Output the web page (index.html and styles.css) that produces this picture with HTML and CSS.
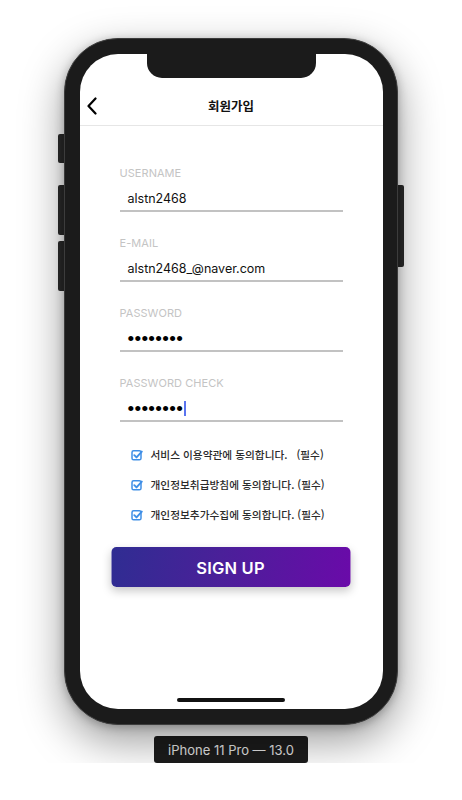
FILE: index.html
```html
<!DOCTYPE html>
<html lang="ko">
<head>
<meta charset="utf-8">
<title>회원가입</title>
<link rel="stylesheet" href="styles.css">
</head>
<body>
<div class="stage">
  <div class="device">
    <span class="hw hw-silent"></span>
    <span class="hw hw-vol-up"></span>
    <span class="hw hw-vol-down"></span>
    <span class="hw hw-power"></span>
    <div class="phone">
      <div class="screen">
        <div class="notch"></div>
        <header class="nav">
          <span class="back">
            <svg width="11" height="18" viewBox="0 0 11 18"><path d="M9.5 1.5 L2.5 9 L9.5 16.5" fill="none" stroke="#000" stroke-width="2.2" stroke-linecap="round" stroke-linejoin="round"/></svg>
          </span>
          <h1 class="title">회원가입</h1>
          <span class="nav-spacer"></span>
        </header>
        <form class="form">
          <div class="field">
            <div class="label">USERNAME</div>
            <div class="value">alstn2468</div>
          </div>
          <div class="field">
            <div class="label">E-MAIL</div>
            <div class="value">alstn2468_@naver.com</div>
          </div>
          <div class="field">
            <div class="label">PASSWORD</div>
            <div class="value"><span class="dots">••••••••</span></div>
          </div>
          <div class="field field-last">
            <div class="label">PASSWORD CHECK</div>
            <div class="value"><span class="dots">••••••••</span><span class="caret"></span></div>
          </div>
          <ul class="agree">
            <li class="agree-row">
              <svg class="check" width="12" height="12" viewBox="0 0 12 12"><rect x="1" y="1.8" width="9" height="9" rx="1.6" fill="none" stroke="#3f8fe6" stroke-width="1.5"/><path d="M3.3 6.2 L5.5 8.4 L10.8 2.6" fill="none" stroke="#3f8fe6" stroke-width="1.9" stroke-linecap="round" stroke-linejoin="round"/></svg>
              <span class="agree-text">서비스 이용약관에 동의합니다. &nbsp;&nbsp;(필수)</span>
            </li>
            <li class="agree-row">
              <svg class="check" width="12" height="12" viewBox="0 0 12 12"><rect x="1" y="1.8" width="9" height="9" rx="1.6" fill="none" stroke="#3f8fe6" stroke-width="1.5"/><path d="M3.3 6.2 L5.5 8.4 L10.8 2.6" fill="none" stroke="#3f8fe6" stroke-width="1.9" stroke-linecap="round" stroke-linejoin="round"/></svg>
              <span class="agree-text">개인정보취급방침에 동의합니다. (필수)</span>
            </li>
            <li class="agree-row">
              <svg class="check" width="12" height="12" viewBox="0 0 12 12"><rect x="1" y="1.8" width="9" height="9" rx="1.6" fill="none" stroke="#3f8fe6" stroke-width="1.5"/><path d="M3.3 6.2 L5.5 8.4 L10.8 2.6" fill="none" stroke="#3f8fe6" stroke-width="1.9" stroke-linecap="round" stroke-linejoin="round"/></svg>
              <span class="agree-text">개인정보추가수집에 동의합니다. (필수)</span>
            </li>
          </ul>
          <button type="button" class="signup">SIGN UP</button>
        </form>
        <div class="home-bar"></div>
      </div>
    </div>
  </div>
  <div class="device-name">iPhone 11 Pro — 13.0</div>
</div>
</body>
</html>
```

FILE: styles.css
```css
* { box-sizing: border-box; }

html, body {
  margin: 0;
  padding: 0;
  background: #ffffff;
}

body {
  font-family: Inter, "Noto Sans CJK KR", sans-serif;
  color: #111;
}

.stage {
  display: flex;
  flex-direction: column;
  align-items: center;
  padding-top: 38px;
}

.device {
  position: relative;
  width: 334px;
  height: 687px;
}

.hw {
  position: absolute;
  background: #2b2b2b;
  border-radius: 2px;
}
.hw-silent { left: -6px; top: 96px; width: 8px; height: 29px; }
.hw-vol-up { left: -6px; top: 147px; width: 8px; height: 50px; }
.hw-vol-down { left: -6px; top: 203px; width: 8px; height: 50px; }
.hw-power { right: -6px; top: 147px; width: 8px; height: 82px; }

.phone {
  position: relative;
  width: 100%;
  height: 100%;
  background: #1b1b1b;
  border: 1.5px solid #3c3c3c;
  border-radius: 54px;
  padding: 14.5px 14.5px 15.5px 14.5px;
  box-shadow: 0 16px 44px rgba(0, 0, 0, 0.4), 0 2px 10px rgba(0, 0, 0, 0.25);
}

.screen {
  position: relative;
  height: 100%;
  background: #fff;
  border-radius: 38px;
  overflow: hidden;
  display: flex;
  flex-direction: column;
}

.notch {
  position: absolute;
  top: 0;
  left: 67px;
  width: 169px;
  height: 24px;
  background: #1b1b1b;
  border-radius: 0 0 15px 15px;
}

.nav {
  margin-top: 34px;
  height: 38px;
  border-bottom: 1px solid #e6e6e6;
  display: grid;
  grid-template-columns: 40px 1fr 40px;
  align-items: center;
  padding-bottom: 1px;
}

.back {
  display: flex;
  align-items: center;
  padding-left: 6px;
  padding-top: 1px;
}

.title {
  margin: 0;
  text-align: center;
  font-family: "Noto Sans CJK KR", sans-serif;
  font-size: 12.5px;
  font-weight: 700;
  color: #111;
}

.form {
  padding: 40px 40px 0 40px;
  display: flex;
  flex-direction: column;
}

.field {
  display: flex;
  flex-direction: column;
  margin-bottom: 24px;
}
.field-last { margin-bottom: 0; }

.label {
  font-size: 11px;
  line-height: 14px;
  color: #c4c4c4;
  letter-spacing: 0.05px;
}

.value {
  margin-top: 11px;
  padding: 0 0 3px 8px;
  font-size: 12.5px;
  line-height: 16px;
  height: 21px;
  color: #111;
  border-bottom: 2px solid #c2c2c2;
  display: flex;
  align-items: center;
}

.dots {
  font-family: "Liberation Sans", sans-serif;
  font-size: 19px;
  line-height: 16px;
  letter-spacing: 0.3px;
  color: #000;
}

.caret {
  display: inline-block;
  width: 1.5px;
  height: 15px;
  background: #5a74f0;
  margin-left: 1px;
}

.agree {
  list-style: none;
  margin: 18px 0 0 0;
  padding: 0 0 0 11px;
}

.agree-row {
  height: 30px;
  display: flex;
  align-items: center;
  gap: 8px;
}

.check { flex: none; }

.agree-text {
  font-family: "Noto Sans CJK KR", sans-serif;
  font-size: 10.7px;
  font-weight: 500;
  color: #2a2a2a;
  white-space: pre;
}

.signup {
  align-self: center;
  margin-top: 17px;
  width: 239px;
  height: 40px;
  border: none;
  border-radius: 5px;
  background: linear-gradient(100deg, #2f2d92 0%, #4a2099 45%, #6a0aa9 100%);
  color: #fff;
  font-family: Inter, sans-serif;
  font-size: 16.5px;
  font-weight: 600;
  letter-spacing: 0.2px;
  padding-top: 3px;
  box-shadow: 0 4px 10px rgba(0, 0, 0, 0.22);
  transform: translateX(-0.5px);
}

.home-bar {
  margin-top: auto;
  margin-bottom: 7px;
  align-self: center;
  width: 108px;
  height: 4px;
  border-radius: 3px;
  background: #111;
}

.device-name {
  margin-top: 11px;
  width: 154px;
  height: 27px;
  background: #1c1c1c;
  border-radius: 3px;
  color: #e6e6e6;
  font-family: Inter, sans-serif;
  font-size: 13px;
  display: flex;
  align-items: center;
  justify-content: center;
}
```
